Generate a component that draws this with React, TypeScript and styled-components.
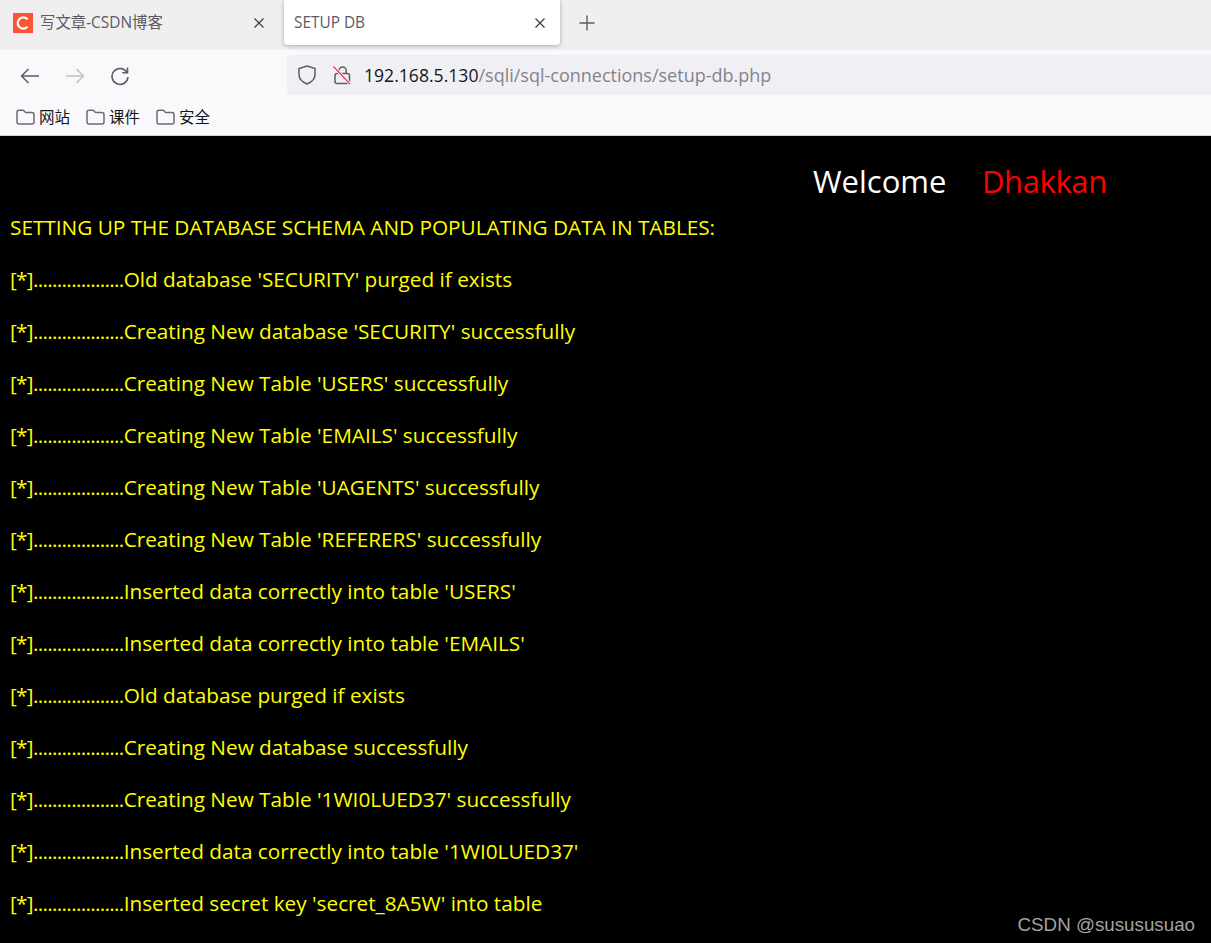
import React from 'react';
import styled, { createGlobalStyle } from 'styled-components';

const uiFont = `'Open Sans', 'Noto Sans CJK SC', sans-serif`;

const GlobalStyle = createGlobalStyle`
  html, body {
    margin: 0;
    padding: 0;
    background: #000;
    overflow: hidden;
  }
`;

const Page = styled.div`
  position: relative;
  width: 1211px;
  height: 943px;
  overflow: hidden;
  font-family: ${uiFont};
`;

const TabBar = styled.div`
  display: flex;
  align-items: flex-start;
  height: 50px;
  background: #efeff0;
  padding-left: 1px;
  box-sizing: border-box;
`;

const Tab = styled.div<{ active?: boolean }>`
  display: flex;
  align-items: center;
  box-sizing: border-box;
  width: ${({ active }) => (active ? '276px' : '280px')};
  height: 45px;
  padding: 0 ${({ active }) => (active ? '14px' : '16px')} 0 ${({ active }) => (active ? '10px' : '12px')};
  margin-right: ${({ active }) => (active ? '0' : '3px')};
  border-radius: 0 0 4px 4px;
  background: ${({ active }) => (active ? '#fff' : 'transparent')};
  box-shadow: ${({ active }) => (active ? '0 1px 4px rgba(0,0,0,.3)' : 'none')};
`;

const TabTitle = styled.span`
  flex: 1;
  margin-left: 7px;
  padding-bottom: 2px;
  font-size: 15.4px;
  color: #5b5b66;
  white-space: nowrap;
`;

const ActiveTitle = styled(TabTitle)`
  margin-left: 0;
  padding-bottom: 0;
`;

const NewTab = styled.div`
  display: flex;
  align-items: center;
  height: 45px;
  margin-left: 19px;
  color: #5b5b66;
`;

const Favicon = styled.div`
  display: flex;
  align-items: center;
  justify-content: center;
  width: 20px;
  height: 20px;
  background: #fc5531;
`;

const Toolbar = styled.div`
  display: flex;
  align-items: center;
  height: 50px;
  background: #f9f9fb;
  padding-left: 20px;
  box-sizing: border-box;
`;

const NavIcons = styled.div`
  display: flex;
  align-items: center;
  gap: 25px;
  width: 267px;
  padding-top: 2px;
`;

const UrlBar = styled.div`
  display: flex;
  align-items: center;
  flex: 1;
  height: 40px;
  margin-right: -10px;
  padding-left: 11px;
  border-radius: 4px;
  background: #f0f0f4;
`;

const UrlIcons = styled.div`
  display: flex;
  align-items: center;
  gap: 17px;
  margin-right: 13px;
`;

const Host = styled.span`
  font-size: 17.6px;
  color: #15141a;
`;

const Path = styled.span`
  font-size: 18px;
  color: #84838d;
`;

const Bookmarks = styled.div`
  display: flex;
  align-items: center;
  gap: 16px;
  height: 36px;
  padding: 0 0 1px 16px;
  box-sizing: border-box;
  background: #f9f9fb;
  border-bottom: 1px solid #d5d5da;
`;

const Bookmark = styled.div`
  display: flex;
  align-items: center;
  gap: 4px;
  font-size: 15.5px;
  color: #15141a;
`;

const BookmarkLabel = styled.span`
  padding-bottom: 2px;
`;

const Content = styled.div`
  background: #000;
  padding-top: 25px;
`;

const Greeting = styled.div`
  display: flex;
  height: 40px;
  padding-left: 813px;
  align-items: center;
  font-size: 31px;
  line-height: 40px;
`;

const Welcome = styled.span`
  color: #fff;
  width: 169px;
`;

const Name = styled.span`
  color: #f00;
  letter-spacing: -0.4px;
`;

const LogList = styled.div`
  display: flex;
  flex-direction: column;
  gap: 26px;
  margin-top: 13px;
  padding-left: 10px;
`;

const LogLine = styled.div`
  height: 26px;
  font-size: 20.75px;
  line-height: 26px;
  color: #ff0;
  white-space: nowrap;
`;

const Marker = styled.span`
  letter-spacing: -0.68px;
`;

const Watermark = styled.div`
  position: absolute;
  right: 16px;
  bottom: 6px;
  font-family: 'Liberation Sans', Arial, sans-serif;
  font-size: 18.75px;
  line-height: 24px;
  color: #a3a3a3;
`;

const Close = () => (
  <svg width="12" height="12" viewBox="0 0 12 12" fill="none" stroke="#3d3d45" strokeWidth="1.2">
    <path d="M1.5 1.5l9 9M10.5 1.5l-9 9" />
  </svg>
);

const FolderIcon = () => (
  <svg width="19" height="16" viewBox="0 0 19 16" fill="none" stroke="#6b6b73" strokeWidth="1.5">
    <path d="M1 3.2C1 2 1.8 1.2 3 1.2h3.6c.6 0 1 .2 1.4.6l1 1.2c.3.3.6.5 1 .5H16c1.2 0 2 .8 2 2v7.6c0 1.2-.8 2-2 2H3c-1.2 0-2-.8-2-2z" />
  </svg>
);

const lines = [
  "Old database 'SECURITY' purged if exists",
  "Creating New database 'SECURITY' successfully",
  "Creating New Table 'USERS' successfully",
  "Creating New Table 'EMAILS' successfully",
  "Creating New Table 'UAGENTS' successfully",
  "Creating New Table 'REFERERS' successfully",
  "Inserted data correctly into table 'USERS'",
  "Inserted data correctly into table 'EMAILS'",
  'Old database purged if exists',
  'Creating New database successfully',
  "Creating New Table '1WI0LUED37' successfully",
  "Inserted data correctly into table '1WI0LUED37'",
  "Inserted secret key 'secret_8A5W' into table",
];

const App = () => (
  <Page>
    <GlobalStyle />
    <TabBar>
      <Tab>
        <Favicon>
          <svg width="14" height="14" viewBox="0 0 14 14" fill="none" stroke="#fff" strokeWidth="2.2">
            <path d="M11.6 3.4A5.6 5.6 0 1 0 11.6 10.6" />
          </svg>
        </Favicon>
        <TabTitle>写文章-CSDN博客</TabTitle>
        <Close />
      </Tab>
      <Tab active>
        <ActiveTitle>SETUP DB</ActiveTitle>
        <Close />
      </Tab>
      <NewTab>
        <svg width="16" height="16" viewBox="0 0 16 16" fill="none" stroke="#5b5b66" strokeWidth="1.4">
          <path d="M8 .5v15M.5 8h15" />
        </svg>
      </NewTab>
    </TabBar>
    <Toolbar>
      <NavIcons>
        <svg width="20" height="16" viewBox="0 0 20 16" fill="none" stroke="#5b5b66" strokeWidth="1.5">
          <path d="M19 8H1.5M8.5 1L1.5 8l7 7" />
        </svg>
        <svg width="20" height="16" viewBox="0 0 20 16" fill="none" stroke="#c0c0c5" strokeWidth="1.5">
          <path d="M1 8h17.5M11.5 1l7 7-7 7" />
        </svg>
        <svg width="20" height="20" viewBox="0 0 20 20" fill="none" stroke="#5b5b66" strokeWidth="1.6">
          <path d="M16.8 6.2A8 8 0 1 0 18 11" />
          <path d="M17.5 1.5v5.2h-5.2" />
        </svg>
      </NavIcons>
      <UrlBar>
        <UrlIcons>
          <svg width="18" height="20" viewBox="0 0 18 20" fill="none" stroke="#5b5b66" strokeWidth="1.5">
            <path d="M9 1l8 2.6v6c0 4.4-3.2 7.6-8 9.4-4.8-1.8-8-5-8-9.4v-6z" />
          </svg>
          <svg width="18" height="20" viewBox="0 0 18 20" fill="none">
            <path d="M6 8V5.5a3.6 3.6 0 0 1 7.2 0V8" stroke="#5b5b66" strokeWidth="1.5" />
            <rect x="2" y="8.5" width="14.5" height="10" rx="2" stroke="#5b5b66" strokeWidth="1.5" />
            <path d="M0.5 1.5L17 19" stroke="#f9f9fb" strokeWidth="3" />
            <path d="M0.5 1.5L17 19" stroke="#f0355c" strokeWidth="1.3" />
          </svg>
        </UrlIcons>
        <Host>192.168.5.130</Host>
        <Path>/sqli/sql-connections/setup-db.php</Path>
      </UrlBar>
    </Toolbar>
    <Bookmarks>
      {['网站', '课件', '安全'].map(name => (
        <Bookmark key={name}>
          <FolderIcon />
          <BookmarkLabel>{name}</BookmarkLabel>
        </Bookmark>
      ))}
    </Bookmarks>
    <Content>
      <Greeting>
        <Welcome>Welcome</Welcome>
        <Name>Dhakkan</Name>
      </Greeting>
      <LogList>
        <LogLine>SETTING UP THE DATABASE SCHEMA AND POPULATING DATA IN TABLES:</LogLine>
        {lines.map(line => (
          <LogLine key={line}>
            <Marker>[*]...................</Marker>
            {line}
          </LogLine>
        ))}
      </LogList>
    </Content>
    <Watermark>CSDN @susususuao</Watermark>
  </Page>
);

export default App;
